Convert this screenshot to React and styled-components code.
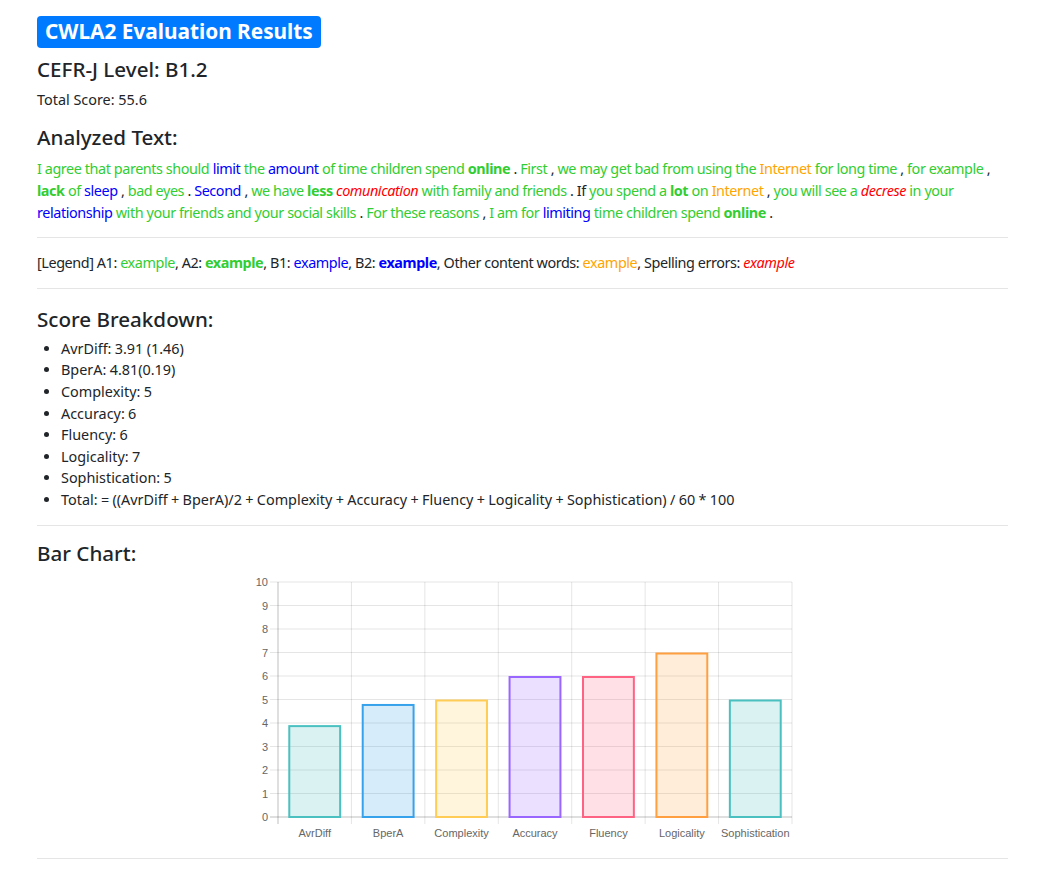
import React from "react";
import styled, { createGlobalStyle } from "styled-components";

const GlobalStyle = createGlobalStyle`
  * { box-sizing: border-box; }
  body {
    margin: 0;
    background: #fff;
    color: #212529;
    font-family: "Noto Sans", "Open Sans", Arial, sans-serif;
    font-size: 14.4px;
    line-height: 1.5;
  }
`;

const A1 = "#32cd32";
const B1 = "#0000ff";
const OTHER = "#ffa500";
const SPELL = "#ff0000";

// kind: a1, a2, b1, b2, other, spell, plain
const analyzed = [
  ["I agree that parents should", "a1"], ["limit", "b1"], ["the", "a1"], ["amount", "b1"],
  ["of time children spend", "a1"], ["online", "a2"], [".", "plain"], ["First", "a1"],
  [",", "plain"], ["we may get bad from using the", "a1"], ["Internet", "other"],
  ["for long time", "a1"], [",", "plain"], ["for example", "a1"], [",", "plain"],
  ["lack", "a2"], ["of", "a1"], ["sleep", "b1"], [",", "plain"], ["bad eyes", "a1"],
  [".", "plain"], ["Second", "b1"], [",", "plain"], ["we have", "a1"], ["less", "a2"],
  ["comunication", "spell"], ["with family and friends", "a1"], [".", "plain"],
  ["If", "plain"], ["you spend a", "a1"], ["lot", "a2"], ["on", "a1"], ["Internet", "other"],
  [",", "plain"], ["you will see a", "a1"], ["decrese", "spell"], ["in your", "a1"],
  ["relationship", "b1"], ["with your friends and your social skills", "a1"], [".", "plain"],
  ["For these reasons", "a1"], [",", "plain"], ["I am for", "a1"], ["limiting", "b1"],
  ["time children spend", "a1"], ["online", "a2"], [".", "plain"],
];

const scores = [
  "AvrDiff: 3.91 (1.46)",
  "BperA: 4.81(0.19)",
  "Complexity: 5",
  "Accuracy: 6",
  "Fluency: 6",
  "Logicality: 7",
  "Sophistication: 5",
  "Total: = ((AvrDiff + BperA)/2 + Complexity + Accuracy + Fluency + Logicality + Sophistication) / 60 * 100",
];

const bars = [
  { label: "AvrDiff", value: 3.91, color: "75,192,192" },
  { label: "BperA", value: 4.81, color: "54,162,235" },
  { label: "Complexity", value: 5, color: "255,205,86" },
  { label: "Accuracy", value: 6, color: "153,102,255" },
  { label: "Fluency", value: 6, color: "255,99,132" },
  { label: "Logicality", value: 7, color: "255,159,64" },
  { label: "Sophistication", value: 5, color: "75,192,192" },
];

function BarChart() {
  const left = 36;
  const right = 550;
  const top = 16;
  const bottom = 251;
  const unit = (bottom - top) / 10;
  const cat = (right - left) / bars.length;
  const bw = cat * 0.72;

  return (
    <ChartSvg width="562" height="278" viewBox="0 0 562 278">
      {Array.from({ length: 11 }, (_, i) => {
        const y = bottom - i * unit;
        return (
          <g key={"y" + i}>
            <line x1="28" x2={right} y1={y} y2={y} stroke={i === 0 ? "rgba(0,0,0,0.25)" : "rgba(0,0,0,0.1)"} />
            <text x="26" y={y + 4} textAnchor="end">{i}</text>
          </g>
        );
      })}
      {Array.from({ length: bars.length + 1 }, (_, i) => {
        const x = left + i * cat;
        return (
          <line key={"x" + i} x1={x} x2={x} y1={top} y2={bottom + 7}
            stroke={i === 0 ? "rgba(0,0,0,0.25)" : "rgba(0,0,0,0.1)"} />
        );
      })}
      {bars.map((b, i) => {
        const cx = left + cat * (i + 0.5);
        const h = b.value * unit;
        return (
          <g key={b.label}>
            <rect x={cx - bw / 2 + 1} y={bottom - h + 1} width={bw - 2} height={h - 1}
              fill={`rgba(${b.color},0.2)`} stroke={`rgb(${b.color})`} strokeWidth="2" />
            <text x={cx} y="271" textAnchor="middle">{b.label}</text>
          </g>
        );
      })}
    </ChartSvg>
  );
}

export default function App() {
  return (
    <>
      <GlobalStyle />
      <Page>
        <Badge>CWLA2 Evaluation Results</Badge>
        <Heading $mt={8}>CEFR-J Level: B1.2</Heading>
        <Para $mt={7}>Total Score: 55.6</Para>

        <Heading $mt={14}>Analyzed Text:</Heading>
        <Para $mt={8} $tight>
          {analyzed.map(([t, k], i) => (
            <React.Fragment key={i}>
              <Word $kind={k}>{t}</Word>{" "}
            </React.Fragment>
          ))}
        </Para>
        <Rule />
        <Para $tight>
          [Legend] A1: <Word $kind="a1">example</Word>, A2: <Word $kind="a2">example</Word>,
          B1: <Word $kind="b1">example</Word>, B2: <Word $kind="b2">example</Word>,
          Other content words: <Word $kind="other">example</Word>, Spelling errors:{" "}
          <Word $kind="spell">example</Word>
        </Para>
        <Rule />

        <Heading $mt={3}>Score Breakdown:</Heading>
        <List>
          {scores.map((s) => (
            <li key={s}>{s}</li>
          ))}
        </List>
        <Rule />

        <Heading>Bar Chart:</Heading>
        <ChartWrap>
          <BarChart />
        </ChartWrap>
        <Rule />
      </Page>
    </>
  );
}

const Page = styled.div`
  width: 971px;
  margin: 0 0 0 37px;
  padding-top: 16px;
  display: flex;
  flex-direction: column;
  align-items: flex-start;
`;

const Badge = styled.span`
  display: inline-block;
  background: #007bff;
  color: #fff;
  font-size: 20.8px;
  font-weight: 700;
  line-height: 1;
  padding: 5px 8px 6px 8px;
  border-radius: 4px;
  white-space: nowrap;
`;

const Heading = styled.h4`
  margin: ${(p) => p.$mt || 0}px 0 0 0;
  font-size: 20.6px;
  font-weight: 500;
  line-height: 26px;
`;

const Para = styled.p`
  margin: ${(p) => p.$mt || 0}px 0 0 0;
  font-size: 14.4px;
  line-height: 21.6px;
  letter-spacing: ${(p) => (p.$tight ? "-0.42px" : "0")};
`;

const Word = styled.span`
  color: ${(p) =>
    ({ a1: A1, a2: A1, b1: B1, b2: B1, other: OTHER, spell: SPELL }[p.$kind] || "#212529")};
  font-weight: ${(p) => (p.$kind === "a2" || p.$kind === "b2" ? 700 : 400)};
  font-style: ${(p) => (p.$kind === "spell" ? "italic" : "normal")};
`;

const Rule = styled.hr`
  align-self: stretch;
  margin: 14px 0 14px 0;
  border: 0;
  border-top: 1px solid rgba(0, 0, 0, 0.1);
`;

const List = styled.ul`
  margin: 6px 0 0 0;
  padding-left: 24px;
  font-size: 14.4px;
  line-height: 21.6px;
  word-spacing: -0.4px;
`;

const ChartWrap = styled.div`
  align-self: stretch;
  display: flex;
  justify-content: center;
`;

const ChartSvg = styled.svg`
  display: block;
  font-family: "Liberation Sans", Arial, sans-serif;
  font-size: 11px;
  fill: #666;
`;
